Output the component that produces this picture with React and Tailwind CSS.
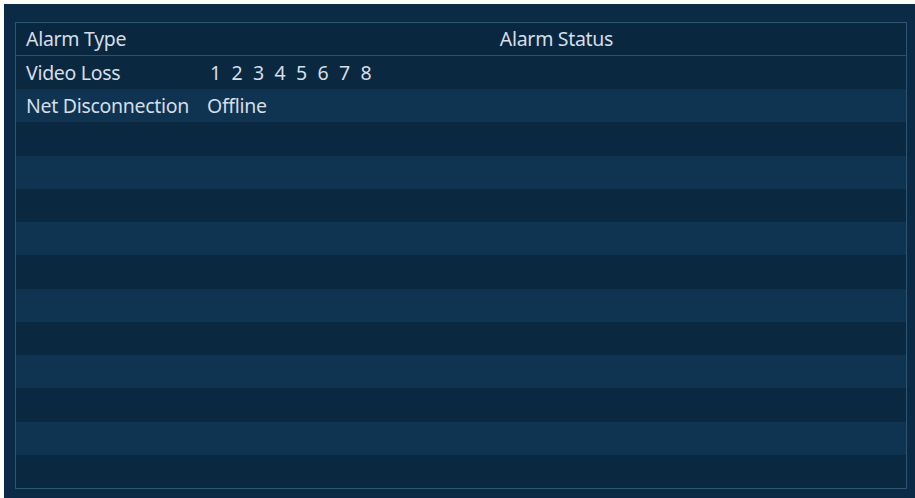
import React from "react";

const rows = Array.from({ length: 13 }, (_, i) => i);

export default function App() {
  return (
    <div
      className="w-[915px] h-[498px] bg-white pt-[4px] pl-[4px] flex"
      style={{ fontFamily: '"Noto Sans", "Open Sans", sans-serif' }}
    >
      <div className="flex-1 bg-[#0b2a45] pl-[11px] pt-[18px] pr-[8px] pb-[9px] flex">
        <div className="flex-1 flex flex-col border border-[#2d5574] text-[#d6dee6] text-[19.5px] tracking-[-0.3px]">
          <div className="h-[33px] flex items-center bg-[#0a2740] border-b border-[#2a5170]">
            <div className="w-[191px] pl-[10px]">Alarm Type</div>
            <div className="flex-1 text-center">Alarm Status</div>
          </div>
          {rows.map((i) => (
            <div
              key={i}
              className={
                "flex-1 flex items-center " +
                (i % 2 === 0 ? "bg-[#0b2841]" : "bg-[#0e3452]")
              }
            >
              {i === 0 && (
                <>
                  <div className="w-[191px] pl-[10px]">Video Loss</div>
                  <div className="flex pl-[3px]">
                    {["1", "2", "3", "4", "5", "6", "7", "8"].map((n) => (
                      <span key={n} className="w-[21.5px]">
                        {n}
                      </span>
                    ))}
                  </div>
                </>
              )}
              {i === 1 && (
                <>
                  <div className="w-[191px] pl-[10px]">Net Disconnection</div>
                  <div>Offline</div>
                </>
              )}
            </div>
          ))}
        </div>
      </div>
    </div>
  );
}
